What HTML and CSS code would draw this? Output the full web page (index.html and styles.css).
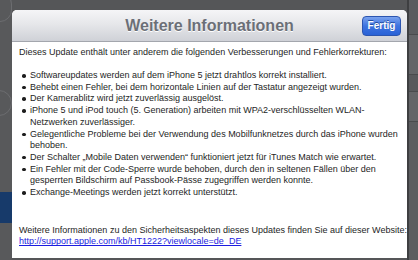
FILE: index.html
```html
<!DOCTYPE html>
<html lang="de">
<head>
<meta charset="utf-8">
<link rel="stylesheet" href="styles.css">
</head>
<body>
<div class="screen">
  <div class="side side-left">
    <div class="ghost-pill"></div>
    <div class="ghost-gap"></div>
    <div class="ghost-ring"></div>
    <div class="ghost-fill"></div>
    <div class="ghost-blue"></div>
  </div>
  <div class="modal">
    <div class="modal-head">
      <span class="modal-title">Weitere Informationen</span>
      <span class="done-btn">Fertig</span>
    </div>
    <div class="modal-body">
      <p class="intro">Dieses Update enthält unter anderem die folgenden Verbesserungen und Fehlerkorrekturen:</p>
      <ul class="notes">
        <li>Softwareupdates werden auf dem iPhone 5 jetzt drahtlos korrekt installiert.</li>
        <li>Behebt einen Fehler, bei dem horizontale Linien auf der Tastatur angezeigt wurden.</li>
        <li>Der Kamerablitz wird jetzt zuverlässig ausgelöst.</li>
        <li>iPhone 5 und iPod touch (5. Generation) arbeiten mit WPA2-verschlüsselten WLAN-Netzwerken zuverlässiger.</li>
        <li>Gelegentliche Probleme bei der Verwendung des Mobilfunknetzes durch das iPhone wurden behoben.</li>
        <li>Der Schalter „Mobile Daten verwenden“ funktioniert jetzt für iTunes Match wie erwartet.</li>
        <li>Ein Fehler mit der Code-Sperre wurde behoben, durch den in seltenen Fällen über den gesperrten Bildschirm auf Passbook-Pässe zugegriffen werden konnte.</li>
        <li>Exchange-Meetings werden jetzt korrekt unterstützt.</li>
      </ul>
      <p class="more">Weitere Informationen zu den Sicherheitsaspekten dieses Updates finden Sie auf dieser Website:<br><a class="link" href="#">http://support.apple.com/kb/HT1222?viewlocale=de_DE</a></p>
    </div>
  </div>
  <div class="side side-right">
    <div class="col-a"></div>
    <div class="col-b"></div>
    <div class="col-c"></div>
    <div class="col-d"></div>
    <div class="col-e"></div>
  </div>
</div>
</body>
</html>
```

FILE: styles.css
```css
* { box-sizing: border-box; }
html, body { margin: 0; padding: 0; }
body {
  width: 418px;
  height: 260px;
  overflow: hidden;
  background: #555658;
  font-family: "Liberation Sans", Arial, sans-serif;
}
.screen {
  display: flex;
  height: 260px;
}
.side {
  flex: none;
  display: flex;
  flex-direction: column;
}
.side-left {
  width: 12px;
  background: #58595b;
  overflow: hidden;
}
.ghost-pill {
  flex: none;
  height: 30px;
  margin-left: -20px;
  margin-top: -8px;
  border: 1px solid #6c6d70;
  border-radius: 12px;
}
.ghost-gap { flex: none; height: 68px; }
.ghost-ring {
  flex: none;
  height: 26px;
  margin-left: -16px;
  border: 1px solid #6c6d70;
  border-radius: 13px;
}
.ghost-fill { flex: none; height: 76px; }
.ghost-blue {
  flex: none;
  height: 31px;
  background: #173a6a;
}
.modal {
  flex: none;
  width: 395px;
  margin-top: 10px;
  height: 248px;
  background: #ffffff;
  border-radius: 5px 5px 0 0;
  display: flex;
  flex-direction: column;
  overflow: hidden;
}
.modal-head {
  flex: none;
  height: 32px;
  display: flex;
  align-items: center;
  justify-content: center;
  background: linear-gradient(#f5f5f7, #e6e7ea 45%, #cfd1d7);
  border-bottom: 1px solid #a3a6ad;
  position: relative;
}
.modal-title {
  font-weight: bold;
  font-size: 16px;
  color: #6b6f77;
  text-shadow: 0 1px 0 #ffffff;
}
.done-btn {
  position: absolute;
  right: 6px;
  top: 6px;
  width: 39px;
  height: 20px;
  border-radius: 4px;
  border: 1px solid #2c55b0;
  background: linear-gradient(#7aa2ee, #3d73e0 50%, #2a62d6);
  color: #ffffff;
  font-weight: bold;
  font-size: 10px;
  line-height: 18px;
  text-align: center;
  text-shadow: 0 -1px 0 #1e4aa0;
}
.modal-body {
  padding: 5px 0 0 7px;
  font-size: 9px;
  line-height: 11.7px;
  color: #1e1e1e;
}
.intro { margin: 0 0 11.3px 0; }
.notes {
  margin: 0;
  padding: 0 0 0 11px;
  list-style: none;
}
.notes li {
  position: relative;
}
.notes li::before {
  content: "";
  position: absolute;
  left: -8px;
  top: 4px;
  width: 3.5px;
  height: 3.5px;
  border-radius: 50%;
  background: #1e1e1e;
}
.more { margin: 26px 0 0 0; }
.link { color: #1c1ce0; text-decoration: underline; }
.side-right {
  width: 11px;
  background: #5e5f62;
  border-left: 2px solid #3e3f41;
}
.col-a { height: 35px; background: #5b5c5f; border-bottom: 1px solid #4a4b4d; }
.col-b { height: 40px; background: #646568; border-bottom: 1px solid #4a4b4d; }
.col-c { height: 17px; background: #58595c; border-bottom: 1px solid #4a4b4d; }
.col-d { height: 30px; background: #646568; border-bottom: 1px solid #4a4b4d; }
.col-e { flex: 1; background: #5c5d60; }
```
